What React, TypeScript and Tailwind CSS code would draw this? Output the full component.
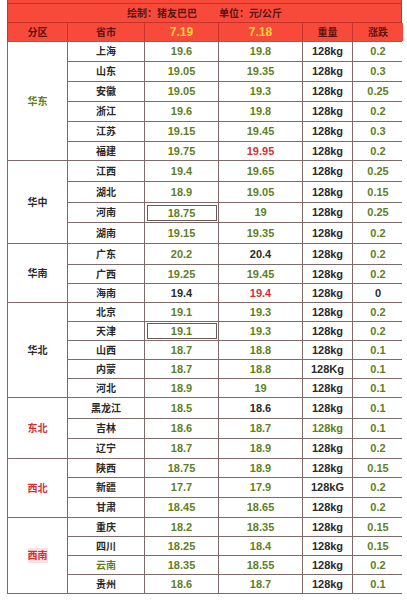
import React from 'react';

type Tone = 'g' | 'k' | 'r';

interface Row {
  city: string;
  a: string;
  b: string;
  w?: string;
  d: string;
  cityTone?: Tone;
  aTone?: Tone;
  bTone?: Tone;
  wTone?: Tone;
  dTone?: Tone;
  boxed?: boolean;
}

interface Group {
  name: string;
  tone: Tone;
  mark?: boolean;
  rows: Row[];
}

const groups: Group[] = [
  {
    name: '华东',
    tone: 'g',
    rows: [
      { city: '上海', a: '19.6', b: '19.8', d: '0.2' },
      { city: '山东', a: '19.05', b: '19.35', d: '0.3' },
      { city: '安徽', a: '19.05', b: '19.3', d: '0.25' },
      { city: '浙江', a: '19.6', b: '19.8', d: '0.2' },
      { city: '江苏', a: '19.15', b: '19.45', d: '0.3' },
      { city: '福建', a: '19.75', b: '19.95', bTone: 'r', d: '0.2' },
    ],
  },
  {
    name: '华中',
    tone: 'k',
    rows: [
      { city: '江西', a: '19.4', b: '19.65', d: '0.25' },
      { city: '湖北', a: '18.9', b: '19.05', d: '0.15' },
      { city: '河南', a: '18.75', b: '19', d: '0.25', boxed: true },
      { city: '湖南', a: '19.15', b: '19.35', d: '0.2' },
    ],
  },
  {
    name: '华南',
    tone: 'k',
    rows: [
      { city: '广东', a: '20.2', b: '20.4', bTone: 'k', d: '0.2' },
      { city: '广西', a: '19.25', b: '19.45', d: '0.2' },
      { city: '海南', a: '19.4', aTone: 'k', b: '19.4', bTone: 'r', d: '0', dTone: 'k' },
    ],
  },
  {
    name: '华北',
    tone: 'k',
    rows: [
      { city: '北京', a: '19.1', b: '19.3', d: '0.2' },
      { city: '天津', a: '19.1', b: '19.3', d: '0.2', boxed: true },
      { city: '山西', a: '18.7', b: '18.8', d: '0.1' },
      { city: '内蒙', a: '18.7', b: '18.8', w: '128Kg', d: '0.1' },
      { city: '河北', a: '18.9', b: '19', d: '0.1' },
    ],
  },
  {
    name: '东北',
    tone: 'r',
    rows: [
      { city: '黑龙江', a: '18.5', b: '18.6', bTone: 'k', d: '0.1' },
      { city: '吉林', a: '18.6', b: '18.7', wTone: 'g', d: '0.1' },
      { city: '辽宁', a: '18.7', b: '18.9', d: '0.2' },
    ],
  },
  {
    name: '西北',
    tone: 'r',
    rows: [
      { city: '陕西', a: '18.75', b: '18.9', d: '0.15' },
      { city: '新疆', a: '17.7', b: '17.9', w: '128kG', d: '0.2' },
      { city: '甘肃', a: '18.45', b: '18.65', d: '0.2' },
    ],
  },
  {
    name: '西南',
    tone: 'r',
    mark: true,
    rows: [
      { city: '重庆', a: '18.2', b: '18.35', d: '0.15' },
      { city: '四川', a: '18.25', b: '18.4', d: '0.15' },
      { city: '云南', cityTone: 'g', a: '18.35', b: '18.55', d: '0.2' },
      { city: '贵州', a: '18.6', b: '18.7', d: '0.1' },
    ],
  },
];

const toneClass: Record<Tone, string> = {
  g: 'text-[#617f22]',
  k: 'text-[#2a2a2a]',
  r: 'text-[#d0313b]',
};

const spanClass: Record<number, string> = {
  3: 'row-span-3',
  4: 'row-span-4',
  5: 'row-span-5',
  6: 'row-span-6',
};

const font = { fontFamily: '"Liberation Sans", "Noto Sans CJK SC", sans-serif' };

const cols = 'grid grid-cols-[59px_76px_73px_83px_49px_50px] gap-px';
// row heights follow the screenshot, which isn't perfectly even
const bodyRows =
  'grid-rows-[19px_19px_19px_19px_19px_18px_20px_20px_19px_20px_20px_18px_18px_18px_18px_18px_18px_18px_20px_19px_19px_18px_19px_19px_18px_18px_18px_18px]';
const cell = 'flex items-center justify-center bg-white font-bold';
const head = 'flex items-center justify-center bg-[#f84a3b] font-bold';

export default function App() {
  return (
    <div className="w-[407px] h-[600px] bg-white overflow-hidden" style={font}>
      <div className="ml-[7px] w-[395px]">
        <div className="h-[3px] bg-[#f84a3b] border-x border-[#c9322a]" />
        <div className="border border-b-0 border-[#c9322a] bg-[#c9322a]">
          <div className="h-[18px] bg-[#f84a3b] flex items-center justify-center text-[10px] font-bold text-[#5a1410]">
            绘制：猪友巴巴<span className="inline-block w-[22px]" />单位：元/公斤
          </div>
          <div className={`${cols} mt-px auto-rows-[18px]`}>
            <div className={`${head} text-[10px] text-[#5a1410]`}>分区</div>
            <div className={`${head} text-[10px] text-[#5a1410]`}>省市</div>
            <div className={`${head} text-[12px] text-[#ffd23f]`}>7.19</div>
            <div className={`${head} text-[12px] text-[#ffd23f]`}>7.18</div>
            <div className={`${head} text-[10px] text-[#5a1410]`}>重量</div>
            <div className={`${head} text-[10px] text-[#5a1410]`}>涨跌</div>
          </div>
        </div>
        <div className={`${cols} ${bodyRows} border border-[#7d6b6b] bg-[#7d6b6b]`}>
          {groups.map((g) => (
            <React.Fragment key={g.name}>
              <div className={`${cell} ${spanClass[g.rows.length]} col-start-1 bg-[#f3f5fb] text-[10px] ${toneClass[g.tone]}`}>
                <span className={g.mark ? 'bg-[#fadfe3]' : ''}>{g.name}</span>
              </div>
              {g.rows.map((r) => (
                <React.Fragment key={r.city}>
                  <div className={`${cell} col-start-2 text-[10px] ${toneClass[r.cityTone ?? 'k']}`}>{r.city}</div>
                  <div className={`${cell} text-[11px] ${toneClass[r.aTone ?? 'g']}`}>
                    {r.boxed ? (
                      <div className="w-[70px] border border-[#6a5a5a] text-center leading-[14px]">{r.a}</div>
                    ) : (
                      r.a
                    )}
                  </div>
                  <div className={`${cell} text-[11px] ${toneClass[r.bTone ?? 'g']}`}>{r.b}</div>
                  <div className={`${cell} text-[11px] ${toneClass[r.wTone ?? 'k']}`}>{r.w ?? '128kg'}</div>
                  <div className={`${cell} text-[11px] ${toneClass[r.dTone ?? 'g']}`}>{r.d}</div>
                </React.Fragment>
              ))}
            </React.Fragment>
          ))}
        </div>
      </div>
    </div>
  );
}
